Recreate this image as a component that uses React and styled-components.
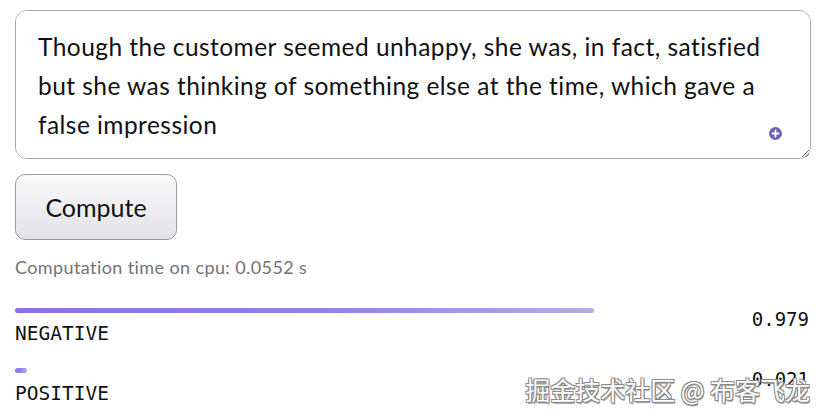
import React from "react";
import styled, { createGlobalStyle } from "styled-components";

const Global = createGlobalStyle`
  html, body { margin: 0; padding: 0; background: #fff; }
  body { font-family: Lato, "Noto Sans", sans-serif; }
`;

const Page = styled.div`
  position: relative;
  width: 825px;
  height: 418px;
  overflow: hidden;
  box-sizing: border-box;
  padding: 10px 14px 0 15px;
  display: flex;
  flex-direction: column;
`;

const InputWrap = styled.div`
  position: relative;
  width: 796px;
`;

const TextArea = styled.textarea`
  display: block;
  box-sizing: border-box;
  width: 796px;
  height: 149px;
  padding: 16px 22px;
  border: 1px solid #a8a8a8;
  border-radius: 12px;
  font-family: Lato, "Noto Sans", sans-serif;
  font-size: 24.5px;
  letter-spacing: 0.45px;
  line-height: 39px;
  color: #111;
  background: #fff;
  white-space: pre-wrap;
  outline: none;
  resize: both;
`;

const Badge = styled.div`
  position: absolute;
  right: 29px;
  bottom: 19px;
  width: 13px;
  height: 13px;
  border-radius: 50%;
  background: #6f63b6;
  display: flex;
  align-items: center;
  justify-content: center;
`;

const Button = styled.button`
  margin-top: 15px;
  width: 162px;
  height: 66px;
  border: 1px solid #9a9aa2;
  border-radius: 10px;
  background: linear-gradient(to bottom, #fafafa, #e2e2e8);
  font-family: Lato, "Noto Sans", sans-serif;
  font-size: 25px;
  color: #111;
  cursor: pointer;
`;

const Timing = styled.div`
  margin-top: 16px;
  font-size: 18px;
  letter-spacing: 0.4px;
  color: #737373;
`;

const Results = styled.div`
  margin-top: 30px;
  display: flex;
  flex-direction: column;
  gap: 21px;
`;

const Row = styled.div`
  display: flex;
  align-items: flex-start;
  justify-content: space-between;
  width: 794px;
`;

const Inner = styled.div`
  width: 591px;
  display: flex;
  flex-direction: column;
`;

const Bar = styled.div`
  height: 5px;
  border-radius: 3px;
  background: linear-gradient(to right, #8a70e8 0%, #9682e6 55%, #b7abe6 100%);
`;

const Label = styled.div`
  margin-top: 8px;
  font-family: "DejaVu Sans Mono", monospace;
  font-size: 19.5px;
  line-height: 26px;
  color: #111;
`;

const Value = styled.div`
  font-family: "DejaVu Sans Mono", monospace;
  font-size: 19px;
  line-height: 26px;
  color: #111;
  margin-top: -2px;
`;

const Watermark = styled.div`
  position: absolute;
  right: 15px;
  bottom: 11px;
  font-family: "Noto Sans CJK SC", sans-serif;
  font-size: 25px;
  color: #fff;
  text-shadow:
    -1px -1px 0 #8a8a8a, 1px -1px 0 #8a8a8a,
    -1px 1px 0 #8a8a8a, 1px 1px 0 #8a8a8a,
    1px 2px 1px #999;
`;

const results = [
  { label: "NEGATIVE", value: 0.979 },
  { label: "POSITIVE", value: 0.021 },
];

export default function App() {
  return (
    <>
      <Global />
      <Page>
        <InputWrap>
          <TextArea
            defaultValue={
              "Though the customer seemed unhappy, she was, in fact, satisfied\nbut she was thinking of something else at the time, which gave a\nfalse impression"
            }
          />
          <Badge>
            <svg width="9" height="9" viewBox="0 0 9 9">
              <path d="M4.5 1.5v6M1.5 4.5h6" stroke="#fff" strokeWidth="1.8" strokeLinecap="round" />
            </svg>
          </Badge>
        </InputWrap>
        <div>
          <Button>Compute</Button>
        </div>
        <Timing>Computation time on cpu: 0.0552 s</Timing>
        <Results>
          {results.map((r) => (
            <Row key={r.label}>
              <Inner>
                <Bar style={{ width: `${r.value * 100}%` }} />
                <Label>{r.label}</Label>
              </Inner>
              <Value>{r.value.toFixed(3)}</Value>
            </Row>
          ))}
        </Results>
        <Watermark>掘金技术社区 @ 布客飞龙</Watermark>
      </Page>
    </>
  );
}
